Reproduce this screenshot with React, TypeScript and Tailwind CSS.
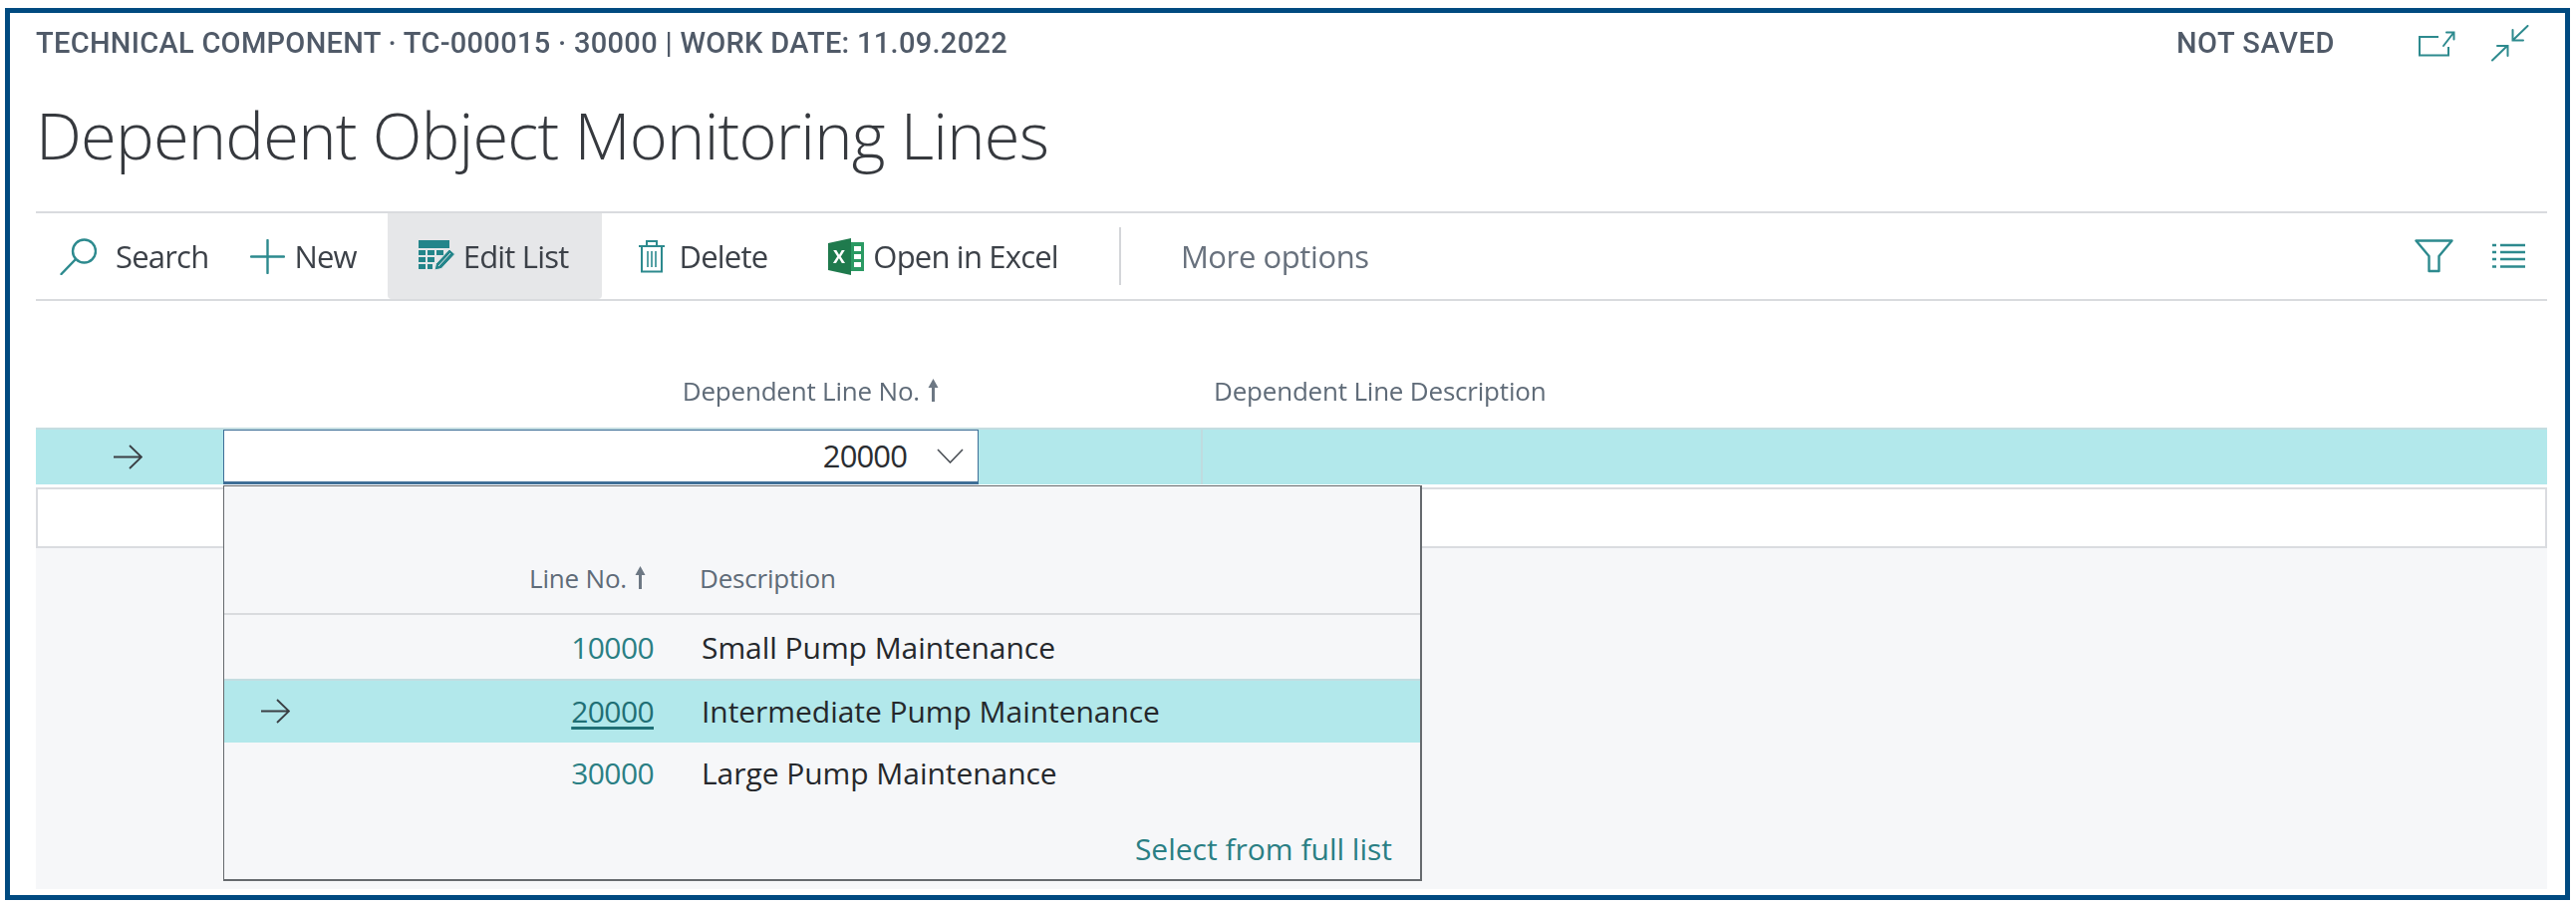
const teal = "#2d8a8e";

function SearchIcon() {
  return (
    <svg width="37" height="37" viewBox="0 0 37 37" fill="none" stroke={teal} strokeWidth="2.4" strokeLinecap="round">
      <circle cx="24.5" cy="13" r="11.5" />
      <path d="M16 21 L1.5 36" />
    </svg>
  );
}

function PlusIcon() {
  return (
    <svg width="35" height="35" viewBox="0 0 35 35" fill="none" stroke={teal} strokeWidth="2.4" strokeLinecap="round">
      <path d="M1 17.5 H34 M17.5 1 V34" />
    </svg>
  );
}

function EditListIcon() {
  return (
    <svg width="37" height="32" viewBox="0 0 37 32" fill="none">
      <rect x="0" y="0" width="31" height="8" fill="#23858a" />
      <path fill="#23858a" d="M0 10 H7 V15 H0 Z M9 10 H16 V15 H9 Z M18 10 H25 V15 H18 Z M0 17 H7 V22 H0 Z M9 17 H16 V22 H9 Z M0 24 H7 V29 H0 Z M9 24 H14 V29 H9 Z" />
      <path d="M16 30 L17.5 23.5 L31 9 L36.5 14 L23 28.5 Z" fill="#23858a" stroke="#e6e7e9" strokeWidth="1" />
      <path d="M20 26 L32 13" stroke="#e6e7e9" strokeWidth="1" />
    </svg>
  );
}

function TrashIcon() {
  return (
    <svg width="28" height="34" viewBox="0 0 28 34" fill="none" stroke={teal} strokeWidth="2">
      <path d="M1 7 H27 M9 6 V2 H19 V6" />
      <path d="M4 8 V32.5 H24 V8" />
      <path d="M10 12 V28 M14 12 V28 M18 12 V28" strokeWidth="1.6" />
    </svg>
  );
}

function ExcelIcon() {
  return (
    <svg width="36" height="37" viewBox="0 0 36 37">
      <path d="M0 5 L23 0 V37 L0 32 Z" fill="#1f7a4d" />
      <rect x="23" y="4" width="13" height="29" fill="#2b9a63" />
      <path fill="#ffffff" d="M26 8 H33 V13 H26 Z M26 16 H33 V21 H26 Z M26 24 H33 V29 H26 Z" />
      <text x="11" y="25" textAnchor="middle" fontSize="18" fontWeight="700" fontFamily="Open Sans, sans-serif" fill="#ffffff">X</text>
    </svg>
  );
}

function FilterIcon() {
  return (
    <svg width="39" height="34" viewBox="0 0 39 34" fill="none" stroke={teal} strokeWidth="2.4" strokeLinejoin="round">
      <path d="M1.5 1.5 H37.5 L24.5 17 V32 H14.5 V17 Z" />
    </svg>
  );
}

function ListIcon() {
  return (
    <svg width="33" height="26" viewBox="0 0 33 26" fill="none" stroke={teal} strokeWidth="2.4">
      <path d="M0 2 H4 M8 2 H33 M0 9 H4 M8 9 H33 M0 16 H4 M8 16 H33 M0 23.5 H4 M8 23.5 H33" />
    </svg>
  );
}

function OpenNewIcon() {
  return (
    <svg width="37" height="27" viewBox="0 0 37 27" fill="none" stroke={teal} strokeWidth="2">
      <path d="M20 7 H1 V25.5 H30 V17" />
      <path d="M25 16 L35 3 M28 2.5 H35.5 V9.5" strokeLinecap="round" />
    </svg>
  );
}

function CollapseIcon() {
  return (
    <svg width="38" height="37" viewBox="0 0 38 37" fill="none" stroke={teal} strokeWidth="2" strokeLinecap="round">
      <path d="M36.5 1 L22 15 M21.5 5 V15.5 H32" />
      <path d="M1 35.5 L16 21 M6 21 H16.5 V31" />
    </svg>
  );
}

function RowArrow() {
  return (
    <svg width="29" height="25" viewBox="0 0 29 25" fill="none" stroke="#3a3f44" strokeWidth="1.8">
      <path d="M0 12.5 H28 M16 1 L28 12.5 L16 24" />
    </svg>
  );
}

function SortArrow() {
  return (
    <svg width="11" height="24" viewBox="0 0 11 24" fill="#6d7884">
      <path d="M5.5 0 L10.5 9 H7 V23 H4 V9 H0.5 Z" />
    </svg>
  );
}

function Tool({ icon, label, className }: { icon: React.ReactNode; label: string; className: string }) {
  return (
    <div className={`flex items-center ${className}`}>
      {icon}
      <span className="font-['Open_Sans',sans-serif] text-[31px] tracking-[-0.8px] text-[#3c4148]">{label}</span>
    </div>
  );
}

const lookup = [
  { no: "10000", desc: "Small Pump Maintenance", extra: "" },
  { no: "20000", desc: "Intermediate Pump Maintenance", active: true, extra: "border-t-2 border-[#c4dde1] bg-[#b2e8eb] pb-[2px]" },
  { no: "30000", desc: "Large Pump Maintenance", extra: "pb-[3px]" },
];

export default function App() {
  return (
    <div className="h-[909px] w-[2585px] overflow-hidden bg-white pb-[6px] pl-[5px] pr-[6px] pt-2">
      <div className="h-full border-[5px] border-[#004a80]">
        <div className="relative flex h-full flex-col pl-[26px] pr-[18px] font-['Open_Sans',sans-serif] blur-[0.5px]">
          <div className="flex h-[58px] items-center pt-[3px] font-['Roboto',sans-serif] text-[29px] font-medium tracking-[0.3px] text-[#505a68]">
            <span>TECHNICAL COMPONENT · TC-000015 · 30000 | WORK DATE: 11.09.2022</span>
            <span className="ml-auto tracking-[0.6px]">NOT SAVED</span>
            <span className="ml-[84px]"><OpenNewIcon /></span>
            <span className="ml-[36px] mr-[18px]"><CollapseIcon /></span>
          </div>

          <h1 className="flex h-[141px] items-center pb-[11px] text-[65px] font-light tracking-[-0.8px] text-[#36393e]">
            Dependent Object Monitoring Lines
          </h1>

          <div className="flex h-[90px] shrink-0 items-stretch border-y-2 border-[#d9dbde]">
            <Tool className="ml-6 gap-[19px]" icon={<SearchIcon />} label="Search" />
            <Tool className="ml-[42px] gap-[9px]" icon={<PlusIcon />} label="New" />
            <Tool className="ml-[31px] gap-[8px] rounded-b bg-[#e6e7e9] pl-[31px] pr-[33px]" icon={<EditListIcon />} label="Edit List" />
            <Tool className="ml-[36px] gap-[14px]" icon={<TrashIcon />} label="Delete" />
            <Tool className="ml-[61px] gap-[9px]" icon={<ExcelIcon />} label="Open in Excel" />
            <div className="ml-[61px] my-[14px] w-0.5 bg-[#d4d6d9]" />
            <span className="ml-[60px] self-center text-[31px] tracking-[-0.4px] text-[#68717d]">More options</span>
            <div className="ml-auto flex items-center gap-[39px] pr-[22px]">
              <FilterIcon />
              <ListIcon />
            </div>
          </div>

          <div className="flex h-[127px] shrink-0 items-end pb-[19px] text-[26px] tracking-[-0.2px] text-[#5f6b78]">
            <div className="flex w-[906px] items-center justify-end gap-2 leading-[36px]">
              <span>Dependent Line No.</span>
              <SortArrow />
            </div>
            <span className="ml-[276px] leading-[36px]">Dependent Line Description</span>
          </div>

          <div className="flex h-[57px] shrink-0 border-t-2 border-[#c4dde1] bg-[#b2e8eb]">
            <div className="flex w-[188px] items-center pl-[78px]">
              <RowArrow />
            </div>
            <div className="flex w-[758px] items-center justify-end gap-[30px] border border-b-[3px] border-[#3f6f97] bg-white pr-[14px] text-[31px] tracking-[-0.9px] text-[#2a2d31]">
              <span>20000</span>
              <svg width="27" height="15" viewBox="0 0 27 15" fill="none" stroke="#4a4f55" strokeWidth="1.6">
                <path d="M1 1 L13.5 14 L26 1" />
              </svg>
            </div>
            <div className="ml-[223px] flex-1 border-l-2 border-[#bfdbdf]" />
          </div>

          <div className="mt-[3px] h-[61px] shrink-0 border-2 border-[#dadce0] bg-white" />
          <div className="mb-[6px] flex-1 bg-[#f6f7f9]" />

          <div className="absolute left-[214px] top-[474px] flex h-[397px] w-[1203px] flex-col border border-r-2 border-b-2 border-[#666a6e] bg-[#f6f7f9]">
            <div className="flex h-[129px] shrink-0 items-end border-b-2 border-[#d9dbde] pb-[17px] text-[26px] tracking-[-0.2px] text-[#5f6b78]">
              <div className="flex w-[423px] items-center justify-end gap-2 leading-[36px]">
                <span>Line No.</span>
                <SortArrow />
              </div>
              <span className="ml-[54px] leading-[36px]">Description</span>
            </div>
            {lookup.map((row) => (
              <div key={row.no} className={`flex h-[64px] shrink-0 items-center text-[30px] ${row.extra}`}>
                <div className="flex w-[431px] items-center justify-between pl-[37px] tracking-[-0.6px]">
                  {row.active ? <RowArrow /> : <span />}
                  <span className={row.active ? "text-[#1f6f75] underline underline-offset-4" : "text-[#2a7f84]"}>{row.no}</span>
                </div>
                <span className="ml-[48px] tracking-[-0.05px] text-[#25282c]">{row.desc}</span>
              </div>
            ))}
            <div className="mt-auto self-end pb-2 pr-[28px] text-[30px] tracking-[0px] text-[#2a7f84]">Select from full list</div>
          </div>
        </div>
      </div>
    </div>
  );
}
